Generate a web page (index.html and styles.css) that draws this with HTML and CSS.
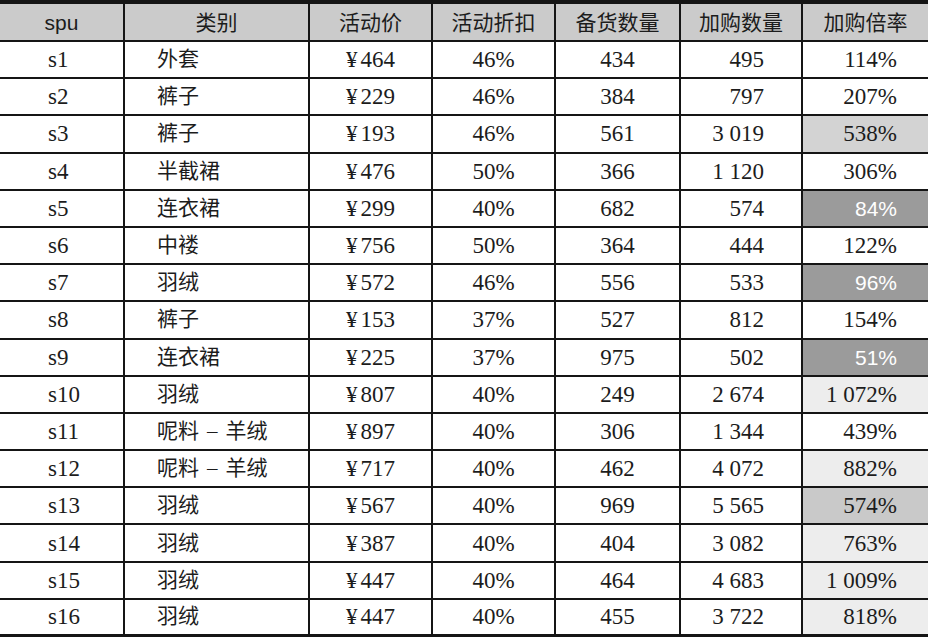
FILE: index.html
```html
<!DOCTYPE html>
<html lang="zh">
<head>
<meta charset="utf-8">
<title>spu 加购倍率</title>
<link rel="stylesheet" href="styles.css">
</head>
<body>
<table class="sheet">
  <colgroup>
    <col class="c-spu"><col class="c-cat"><col class="c-price"><col class="c-disc"><col class="c-stock"><col class="c-add"><col class="c-rate">
  </colgroup>
  <thead>
    <tr><th>spu</th><th>类别</th><th>活动价</th><th>活动折扣</th><th>备货数量</th><th>加购数量</th><th>加购倍率</th></tr>
  </thead>
  <tbody>
    <tr><td class="spu">s1</td><td class="cat">外套</td><td class="ctr"><span class="yen">¥</span>464</td><td class="ctr">46%</td><td class="ctr">434</td><td class="add">495</td><td class="rate">114%</td></tr>
    <tr><td class="spu">s2</td><td class="cat">裤子</td><td class="ctr"><span class="yen">¥</span>229</td><td class="ctr">46%</td><td class="ctr">384</td><td class="add">797</td><td class="rate">207%</td></tr>
    <tr><td class="spu">s3</td><td class="cat">裤子</td><td class="ctr"><span class="yen">¥</span>193</td><td class="ctr">46%</td><td class="ctr">561</td><td class="add">3 019</td><td class="rate mid">538%</td></tr>
    <tr><td class="spu">s4</td><td class="cat">半截裙</td><td class="ctr"><span class="yen">¥</span>476</td><td class="ctr">50%</td><td class="ctr">366</td><td class="add">1 120</td><td class="rate">306%</td></tr>
    <tr><td class="spu">s5</td><td class="cat">连衣裙</td><td class="ctr"><span class="yen">¥</span>299</td><td class="ctr">40%</td><td class="ctr">682</td><td class="add">574</td><td class="rate dark">84%</td></tr>
    <tr><td class="spu">s6</td><td class="cat">中褛</td><td class="ctr"><span class="yen">¥</span>756</td><td class="ctr">50%</td><td class="ctr">364</td><td class="add">444</td><td class="rate">122%</td></tr>
    <tr><td class="spu">s7</td><td class="cat">羽绒</td><td class="ctr"><span class="yen">¥</span>572</td><td class="ctr">46%</td><td class="ctr">556</td><td class="add">533</td><td class="rate dark">96%</td></tr>
    <tr><td class="spu">s8</td><td class="cat">裤子</td><td class="ctr"><span class="yen">¥</span>153</td><td class="ctr">37%</td><td class="ctr">527</td><td class="add">812</td><td class="rate">154%</td></tr>
    <tr><td class="spu">s9</td><td class="cat">连衣裙</td><td class="ctr"><span class="yen">¥</span>225</td><td class="ctr">37%</td><td class="ctr">975</td><td class="add">502</td><td class="rate dark">51%</td></tr>
    <tr><td class="spu">s10</td><td class="cat">羽绒</td><td class="ctr"><span class="yen">¥</span>807</td><td class="ctr">40%</td><td class="ctr">249</td><td class="add">2 674</td><td class="rate light">1 072%</td></tr>
    <tr><td class="spu">s11</td><td class="cat">呢料<span class="dash">–</span>羊绒</td><td class="ctr"><span class="yen">¥</span>897</td><td class="ctr">40%</td><td class="ctr">306</td><td class="add">1 344</td><td class="rate">439%</td></tr>
    <tr><td class="spu">s12</td><td class="cat">呢料<span class="dash">–</span>羊绒</td><td class="ctr"><span class="yen">¥</span>717</td><td class="ctr">40%</td><td class="ctr">462</td><td class="add">4 072</td><td class="rate light">882%</td></tr>
    <tr><td class="spu">s13</td><td class="cat">羽绒</td><td class="ctr"><span class="yen">¥</span>567</td><td class="ctr">40%</td><td class="ctr">969</td><td class="add">5 565</td><td class="rate mid2">574%</td></tr>
    <tr><td class="spu">s14</td><td class="cat">羽绒</td><td class="ctr"><span class="yen">¥</span>387</td><td class="ctr">40%</td><td class="ctr">404</td><td class="add">3 082</td><td class="rate light">763%</td></tr>
    <tr><td class="spu">s15</td><td class="cat">羽绒</td><td class="ctr"><span class="yen">¥</span>447</td><td class="ctr">40%</td><td class="ctr">464</td><td class="add">4 683</td><td class="rate light">1 009%</td></tr>
    <tr><td class="spu">s16</td><td class="cat">羽绒</td><td class="ctr"><span class="yen">¥</span>447</td><td class="ctr">40%</td><td class="ctr">455</td><td class="add">3 722</td><td class="rate light">818%</td></tr>
  </tbody>
</table>
</body>
</html>
```
FILE: styles.css
```css
html, body {
  margin: 0;
  padding: 0;
  background: #ffffff;
}

.sheet {
  width: 928px;
  border-collapse: collapse;
  table-layout: fixed;
  border-top: 4px solid #151515;
  border-bottom: 4px solid #151515;
  color: #1c1c1c;
}

.c-spu { width: 124px; }
.c-cat { width: 185px; }
.c-price { width: 123px; }
.c-disc { width: 123px; }
.c-stock { width: 125px; }
.c-add { width: 122px; }
.c-rate { width: 126px; }

.sheet th,
.sheet td {
  border-left: 2px solid #151515;
  border-bottom: 2px solid #151515;
  padding: 0;
  white-space: nowrap;
}

.sheet th:first-child,
.sheet td:first-child {
  border-left: none;
}

.sheet thead tr {
  height: 39px;
}

.sheet tbody tr {
  height: 37.2px;
}

.sheet th {
  background: #cbcbcb;
  font-family: "Liberation Sans", "Noto Sans CJK SC", sans-serif;
  font-weight: normal;
  font-size: 21px;
  text-align: center;
  line-height: 1;
}

.sheet td {
  font-family: "Liberation Serif", "Noto Sans CJK SC", serif;
  font-size: 23px;
  line-height: 1;
}

.sheet td.cat {
  font-size: 21px;
  padding-left: 32px;
  text-align: left;
}

.dash {
  font-family: "Liberation Serif", serif;
  margin: 0 8px;
}

.yen {
  margin-right: 3px;
}

.spu {
  text-align: left;
  padding-left: 48px !important;
}

.ctr {
  text-align: center;
}

.add {
  text-align: right;
  padding-right: 37px !important;
}

.rate {
  text-align: right;
  padding-right: 31px !important;
}

.rate.light {
  background: #ededed;
}

.rate.mid {
  background: #d3d3d3;
}

.rate.mid2 {
  background: #c9c9c9;
}

.rate.dark {
  background: #9b9b9b;
  color: #ffffff;
  font-family: "Liberation Sans", sans-serif;
  font-size: 21px;
}
```
